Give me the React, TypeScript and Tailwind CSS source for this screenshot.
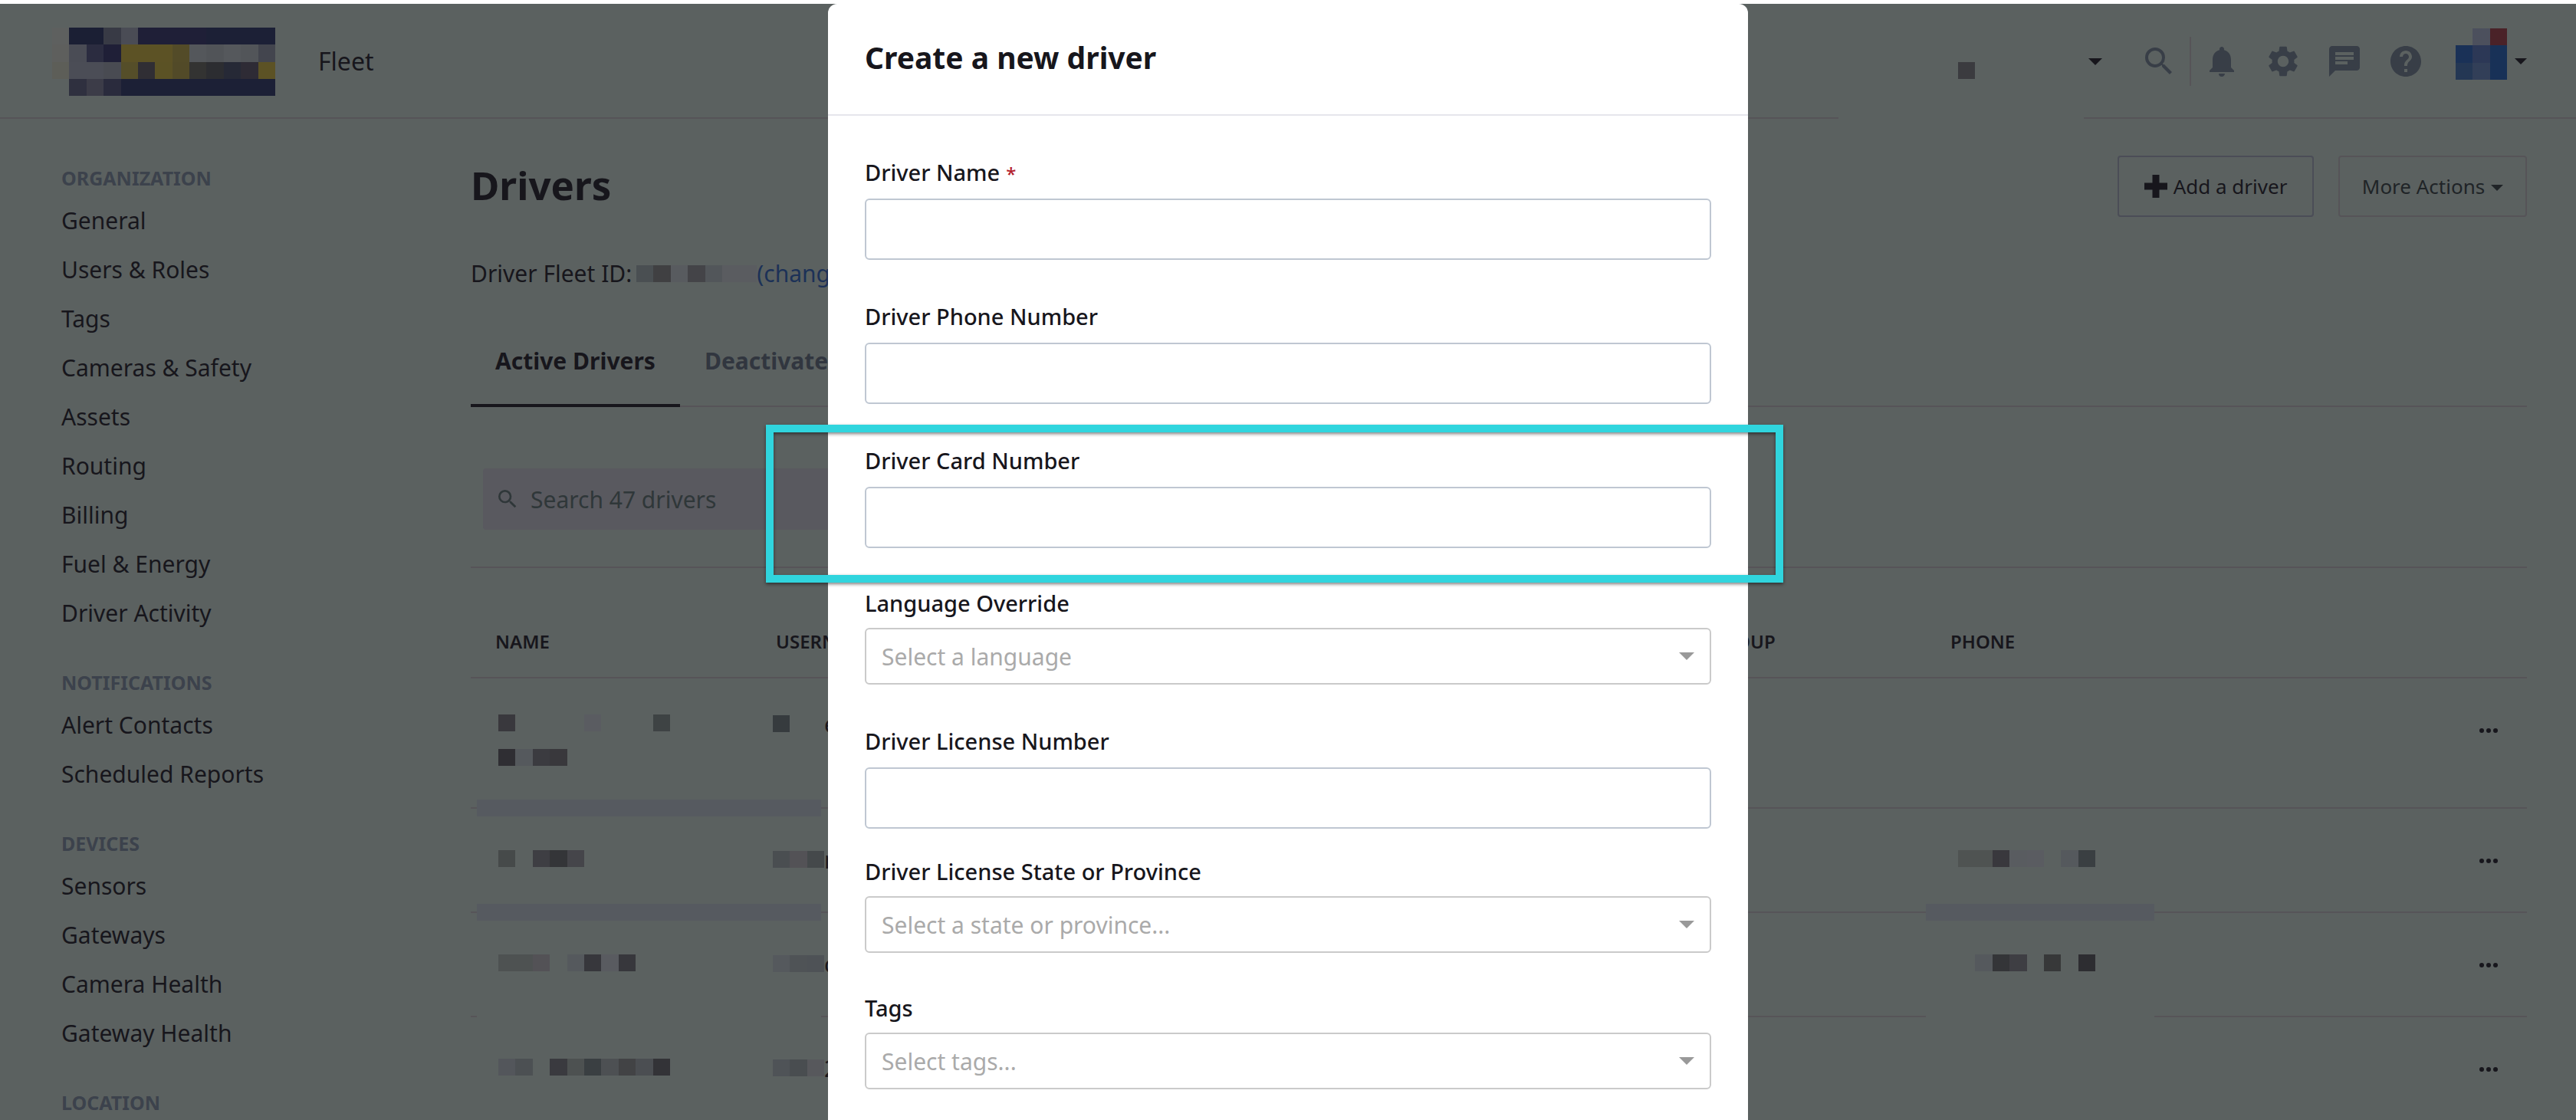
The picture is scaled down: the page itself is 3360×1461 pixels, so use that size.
import React from 'react';
import { MdChat, MdHelp, MdNotifications, MdSearch, MdSettings } from 'react-icons/md';

type Cell = string | null;

interface MosaicProps {
  rows: Cell[][];
  label: string;
}

interface NavGroup {
  title: string;
  items: string[];
}

interface DriverRow {
  id: number;
  rowClass: string;
  cellClass: string;
  name: Cell[][];
  username: Cell[][];
  usernameTail: string;
  phone: Cell[][] | null;
  nameStrip: string;
  phoneStrip: string;
}

interface Field {
  id: string;
  label: string;
  kind: 'text' | 'select';
  spacing: string;
  placeholder?: string;
  required?: boolean;
  highlighted?: boolean;
}

const CELL = 22.36;

const LOGO: Cell[][] = [
  ['#5e605f', '#1b1f34', '#1b1f34', '#383a45', '#4a4c55', '#1f1f37', '#1f1f37', '#1f1f37', '#1f1f37', '#1c2036', '#1c2036', '#1c2036', '#1c2036'],
  ['#5e5f5d', '#4a4c55', '#2b2c40', '#1f1f37', '#5c5225', '#5c5225', '#5c5225', '#534b28', '#54575b', '#515458', '#55585c', '#525559', '#43454e'],
  ['#5d5e58', '#4b4d56', '#4b4d56', '#494b52', '#554e29', '#302e34', '#5b5225', '#524a28', '#333332', '#2c2d31', '#262936', '#2e2b35', '#5c5225'],
  [null, '#2f303f', '#3c3c48', '#2a2b3d', '#1c2036', '#1c2036', '#1c2036', '#1c2036', '#1c2036', '#1c2036', '#1c2036', '#1c2036', '#1c2036'],
];

const AVATAR: Cell[][] = [
  [null, '#4c505d', '#4a2228'],
  ['#1a3157', '#2c3856', '#183157'],
  ['#243754', '#323f58', '#183157'],
];

const NAV: NavGroup[] = [
  {
    title: 'ORGANIZATION',
    items: [
      'General',
      'Users & Roles',
      'Tags',
      'Cameras & Safety',
      'Assets',
      'Routing',
      'Billing',
      'Fuel & Energy',
      'Driver Activity',
    ],
  },
  { title: 'NOTIFICATIONS', items: ['Alert Contacts', 'Scheduled Reports'] },
  { title: 'DEVICES', items: ['Sensors', 'Gateways', 'Camera Health', 'Gateway Health'] },
  { title: 'LOCATION', items: [] },
];

const DRIVERS: DriverRow[] = [
  {
    id: 1,
    rowClass: 'h-[170px]',
    cellClass: 'pt-[47px]',
    name: [
      ['#39383d', null, null, null, null, '#5a5c61', null, null, null, '#3e4344'],
      [],
      ['#2f2e33', '#55595d', '#3b3b40', '#39383c'],
    ],
    username: [['#363b3e', null, null]],
    usernameTail: 'e',
    phone: null,
    nameStrip: 'bg-[#565a60]',
    phoneStrip: '',
  },
  {
    id: 2,
    rowClass: 'h-[136px]',
    cellClass: 'pt-[54px]',
    name: [['#464a4a', null, '#3e3e43', '#343538', '#45454a']],
    username: [['#4a4e51', '#535256', '#45494b']],
    usernameTail: 'm',
    phone: [['#4f5352', '#4f5352', '#39383d', '#595c60', '#5a5c61', null, '#55595d', '#3a3f42']],
    nameStrip: 'bg-[#565a60]',
    phoneStrip: 'bg-[#565a60]',
  },
  {
    id: 3,
    rowClass: 'h-[136px]',
    cellClass: 'pt-[54px]',
    name: [['#4e5252', '#4e5252', '#535256', null, '#55595d', '#37373c', '#595b60', '#37373c']],
    username: [['#55595d', '#4f5356', '#4e5256']],
    usernameTail: 'c',
    phone: [[null, '#55595d', '#343538', '#3e3e43', null, '#373839', null, '#2d2d31']],
    nameStrip: 'bg-[#5b6160]',
    phoneStrip: 'bg-[#5b6160]',
  },
  {
    id: 4,
    rowClass: 'h-[136px]',
    cellClass: 'pt-[54px]',
    name: [['#53565b', '#4c5053', null, '#3a3a3f', '#4d5151', '#3a3f42', '#4d5053', '#424345', '#4b4e52', '#333337']],
    username: [['#4f5357', '#494d50', '#57585c']],
    usernameTail: '2',
    phone: null,
    nameStrip: '',
    phoneStrip: '',
  },
];

const FIELDS: Field[] = [
  { id: 'name', label: 'Driver Name', kind: 'text', spacing: 'mt-[54px]', required: true },
  { id: 'phone', label: 'Driver Phone Number', kind: 'text', spacing: 'mt-[54px]' },
  { id: 'card', label: 'Driver Card Number', kind: 'text', spacing: 'mt-[54px]', highlighted: true },
  { id: 'language', label: 'Language Override', kind: 'select', spacing: 'mt-[52px]', placeholder: 'Select a language' },
  { id: 'license', label: 'Driver License Number', kind: 'text', spacing: 'mt-[54px]' },
  { id: 'state', label: 'Driver License State or Province', kind: 'select', spacing: 'mt-9', placeholder: 'Select a state or province...' },
  { id: 'tags', label: 'Tags', kind: 'select', spacing: 'mt-[52px]', placeholder: 'Select tags...' },
];

// Private data is drawn as a grid of flat colour cells.
const Mosaic: React.FC<MosaicProps> = ({ rows, label }) => {
  const cols = Math.max(...rows.map((row) => row.length));
  return (
    <svg
      role="img"
      aria-label={label}
      width={Math.round(cols * CELL)}
      height={Math.round(rows.length * CELL)}
      viewBox={`0 0 ${cols} ${rows.length}`}
      preserveAspectRatio="none"
      shapeRendering="crispEdges"
      className="shrink-0"
    >
      {rows.map((row, y) =>
        row.map((fill, x) => fill && <rect key={`${x}-${y}`} x={x} y={y} width="1" height="1" fill={fill} />)
      )}
    </svg>
  );
};

const Caret: React.FC<{ className: string }> = ({ className }) => (
  <svg viewBox="0 0 20 10" className={className} fill="currentColor" aria-hidden="true">
    <path d="M0 0h20L10 10z" />
  </svg>
);

const Header: React.FC = () => (
  <header className="relative flex items-center h-[150px] pt-0.5 pl-[68px] pr-16 border-b-2 border-[#565458] text-[#383e47]">
    <Mosaic rows={LOGO} label="Company logo" />
    <span className="ml-14 text-[32px] leading-10 text-[#17161c]">Fleet</span>

    <div className="ml-auto flex items-center">
      <button aria-label="Switch organization" className="flex items-center gap-[148px] text-[#17161c]">
        <Mosaic rows={[[null], ['#3b3b3f']]} label="Organization" />
        <Caret className="w-[18px] h-[9px]" />
      </button>
      <button aria-label="Search" className="ml-[50px]">
        <MdSearch className="size-12" />
      </button>
      <div className="mx-4 w-0.5 h-16 bg-[#565458]" />
      <div className="flex items-center gap-8">
        <button aria-label="Alerts">
          <MdNotifications className="size-12" />
        </button>
        <button aria-label="Settings">
          <MdSettings className="size-12" />
        </button>
        <button aria-label="Messages">
          <MdChat className="size-12" />
        </button>
        <button aria-label="Help">
          <MdHelp className="size-12" />
        </button>
      </div>
      <button aria-label="Account" className="ml-[41px] mb-5 flex items-center gap-2.5 text-[#17161c]">
        <Mosaic rows={AVATAR} label="Avatar" />
        <Caret className="mt-5 w-4 h-2" />
      </button>
    </div>

    <div className="absolute right-[642px] -bottom-0.5 w-80 h-0.5 bg-[#5b6160]" />
  </header>
);

const Sidebar: React.FC = () => (
  <nav className="w-[614px] shrink-0 pl-20 pt-[53px] flex flex-col gap-[34px]">
    {NAV.map((group) => (
      <div key={group.title}>
        <h2 className="text-[25px] leading-[48px] font-bold text-[#3c424c]">{group.title}</h2>
        <ul>
          {group.items.map((item) => (
            <li key={item}>
              <a href="#" className="block text-[30px] leading-[64px]">
                {item}
              </a>
            </li>
          ))}
        </ul>
      </div>
    ))}
  </nav>
);

const DriversTable: React.FC = () => (
  <table className="mt-12 w-full table-fixed border-separate border-spacing-0 border-t-2 border-[#565458] text-left">
    <colgroup>
      <col className="w-[366px]" />
      <col />
      <col className="w-[376px]" />
      <col className="w-[600px]" />
      <col className="w-[184px]" />
    </colgroup>
    <thead>
      <tr className="h-[144px] text-2xl">
        <th className="pt-[50px] pl-8 border-b-2 border-[#565458] font-semibold">NAME</th>
        <th className="pt-[50px] pl-8 border-b-2 border-[#565458] font-semibold">USERNAME</th>
        <th className="pt-[50px] pl-8 border-b-2 border-[#565458] font-semibold">PEER GROUP</th>
        <th className="pt-[50px] pl-8 border-b-2 border-[#565458] font-semibold">PHONE</th>
        <th aria-label="Actions" className="border-b-2 border-[#565458]" />
      </tr>
    </thead>
    <tbody>
      {DRIVERS.map((driver) => (
        <tr key={driver.id} className={`${driver.rowClass} align-top`}>
          <td className={`${driver.cellClass} relative pl-9 border-b-2 border-[#565458]`}>
            <Mosaic rows={driver.name} label="Driver name" />
            {driver.nameStrip && (
              <div className={`absolute z-10 left-2 -bottom-3 w-[449px] h-[22px] ${driver.nameStrip}`} />
            )}
          </td>
          <td className={`${driver.cellClass} pl-7 border-b-2 border-[#565458]`}>
            <div className="flex items-center h-6 text-[30px]">
              <Mosaic rows={driver.username} label="Username" />
              {driver.usernameTail}
            </div>
          </td>
          <td className="border-b-2 border-[#565458]" />
          <td className={`${driver.cellClass} relative pl-[42px] border-b-2 border-[#565458]`}>
            {driver.phone && <Mosaic rows={driver.phone} label="Phone number" />}
            {driver.phoneStrip && (
              <div className={`absolute left-0 -bottom-3 w-[298px] h-[22px] ${driver.phoneStrip}`} />
            )}
          </td>
          <td className="pt-14 pr-[38px] border-b-2 border-[#565458]">
            <button aria-label="Driver actions" className="flex ml-auto">
              <svg viewBox="0 0 24 24" className="size-6" fill="currentColor" aria-hidden="true">
                <circle cx="3" cy="12" r="3" />
                <circle cx="12" cy="12" r="3" />
                <circle cx="21" cy="12" r="3" />
              </svg>
            </button>
          </td>
        </tr>
      ))}
    </tbody>
  </table>
);

const DriversPage: React.FC = () => (
  <main className="flex-1 min-w-0 pt-12 pr-16">
    <div className="flex items-center justify-between h-20">
      <h1 className="pb-1 text-[51px] leading-[60px] font-bold">Drivers</h1>
      <div className="flex gap-8 text-[26px]">
        <button className="flex items-center justify-center gap-2 w-64 h-20 border-2 border-[#4b4d57] rounded">
          <svg viewBox="0 0 30 30" className="size-[30px]" fill="currentColor" aria-hidden="true">
            <path d="M10.500 0h9v10.500H30v9H19.500V30h-9V19.500H0v-9h10.500z" />
          </svg>
          Add a driver
        </button>
        <button className="flex items-center justify-center gap-2 w-[246px] h-20 border-2 border-[#565458] rounded text-[#202427]">
          More Actions
          <Caret className="w-4 h-2 mt-1" />
        </button>
      </div>
    </div>

    <div className="mt-[54px] flex items-center text-[30px] leading-10">
      <span className="mr-1.5">Driver Fleet ID:</span>
      <Mosaic rows={[['#4a4f52', '#404042', '#585b5f', '#444448', '#52565a', '#5a5c60', '#5a5c60']]} label="Fleet ID" />
      <a href="#" className="text-[#1c3157]">
        (change)
      </a>
    </div>

    <div role="tablist" className="mt-[74px] flex text-[30px] leading-10 font-bold shadow-[inset_0_-2px_#565458]">
      <button role="tab" aria-selected="true" className="px-8 pb-9 border-b-4 border-[#17161c]">
        Active Drivers
      </button>
      <button role="tab" aria-selected="false" className="px-8 pb-9 mb-1 text-[#31363f]">
        Deactivated Drivers
      </button>
    </div>

    <div className="mt-20 ml-4 flex items-center gap-3.5 w-[700px] h-20 pl-4 rounded bg-[#59595f] text-[#2f3739]">
      <MdSearch className="size-8" />
      <input
        type="search"
        aria-label="Search drivers"
        placeholder="Search 47 drivers"
        className="flex-1 text-[30px] bg-transparent outline-none placeholder:text-[#2f3739]"
      />
    </div>

    <DriversTable />
  </main>
);

const FormField: React.FC<{ field: Field }> = ({ field }) => (
  <div className={`relative ${field.spacing}`}>
    <label htmlFor={field.id} className="block text-[29px] leading-10 font-medium">
      {field.label}
      {field.required && <span className="ml-2 text-2xl text-[#b3202c]">*</span>}
    </label>
    {field.kind === 'text' ? (
      <input
        id={field.id}
        type="text"
        className="mt-3.5 block w-full h-20 px-5 text-[30px] border-2 border-[#bfc7d2] rounded-md bg-white outline-none"
      />
    ) : (
      <div className="relative mt-3">
        <select
          id={field.id}
          className="block w-full h-[74px] px-5 text-[30px] text-[#aaaaaa] border-2 border-[#cacaca] rounded-md bg-white appearance-none outline-none"
        >
          <option>{field.placeholder}</option>
        </select>
        <Caret className="absolute right-[22px] top-8 w-5 h-2.5 text-[#999999] pointer-events-none" />
      </div>
    )}
    {field.highlighted && (
      <div className="absolute -left-[129px] -right-[94px] -top-[27px] h-[206px] border-[10px] border-[#30d5de] drop-shadow-[0_2px_2px_rgba(0,0,0,0.5)] pointer-events-none" />
    )}
  </div>
);

const CreateDriverDialog: React.FC = () => (
  <div className="absolute inset-x-0 top-[5px] bottom-0 z-20 flex justify-center">
    <div role="dialog" aria-labelledby="dialog-title" className="w-[1200px] bg-white rounded-t-xl">
      <div className="flex items-center h-[146px] px-12 pb-1 border-b-2 border-[#e6e6ec]">
        <h2 id="dialog-title" className="text-[39px] font-bold">
          Create a new driver
        </h2>
      </div>
      <form className="px-12">
        {FIELDS.map((field) => (
          <FormField key={field.id} field={field} />
        ))}
      </form>
    </div>
  </div>
);

export default function App() {
  return (
    <div className="relative h-screen overflow-hidden pt-[5px] bg-white font-['Noto_Sans',sans-serif] text-[#17161c]">
      <div className="min-h-full bg-[#5b6160]">
        <Header />
        <div className="flex">
          <Sidebar />
          <DriversPage />
        </div>
      </div>
      <CreateDriverDialog />
    </div>
  );
}
